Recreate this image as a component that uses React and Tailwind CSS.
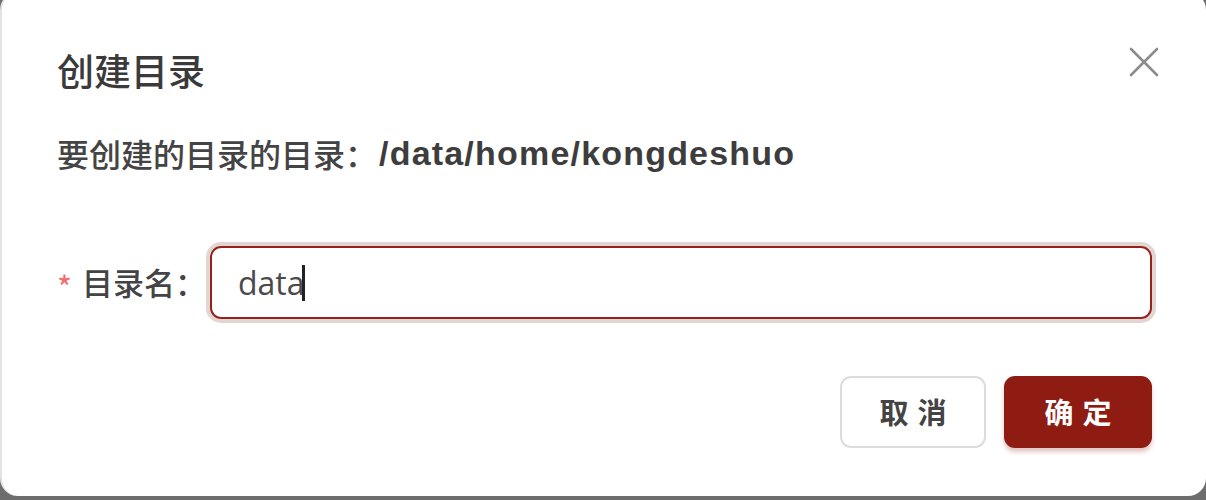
import { useState } from 'react';

const cjk = { fontFamily: '"Noto Sans CJK SC", "Noto Sans", sans-serif' };

export default function App() {
  const [name, setName] = useState('data');

  return (
    <div className="w-[1206px] h-[500px] bg-[#6d6d6d] overflow-hidden" style={cjk}>
      <div className="relative -mt-[8px] h-[504px] bg-white rounded-[18px] border-l-2 border-[#e2e2e2] pl-[55px] pr-[54px] pt-[56px]">
        {/* close */}
        <button className="absolute right-[47px] top-[55px] w-[30px] h-[30px] flex items-center justify-center">
          <svg width="30" height="30" viewBox="0 0 30 30" fill="none" stroke="#8c8c8c" strokeWidth="2.6" strokeLinecap="round">
            <path d="M2 2 L28 28 M28 2 L2 28" />
          </svg>
        </button>

        <h1 className="text-[37px] leading-[44px] text-[#3a3a3a] font-medium">创建目录</h1>

        <div className="mt-[40px] flex items-center h-[42px] text-[32px] text-[#444] font-medium">
          <span>要创建的目录的目录：</span>
          <span className="ml-[2px] font-bold text-[34px] tracking-[1.2px] text-[#3d3d3d]" style={{ fontFamily: '"Liberation Sans", Arial, sans-serif' }}>
            /data/home/kongdeshuo
          </span>
        </div>

        <div className="mt-[72px] flex items-center">
          <label className="flex items-center w-[153px] shrink-0 whitespace-nowrap text-[31px] text-[#444] font-medium">
            <span className="text-[#f26b6b] text-[32px] font-normal mr-[10px] mt-[6px]">*</span>
            <span>目录名：</span>
          </label>
          <div className="relative flex-1">
            <input
              value={name}
              onChange={(e) => setName(e.target.value)}
              className="w-full h-[73px] rounded-[11px] border-[2.5px] border-[#962219] shadow-[0_0_0_4px_rgba(110,50,40,0.2)] px-[26px] text-[32px] text-[#4a4a4a] outline-none"
              style={{ fontFamily: '"Open Sans", "Noto Sans", sans-serif' }}
            />
            {/* caret */}
            <span className="absolute left-[92px] top-[19px] w-[3px] h-[36px] bg-[#222]" />
          </div>
        </div>

        <div className="mt-[57px] flex justify-end gap-[18px]">
          <button className="w-[146px] h-[72px] rounded-[11px] border-2 border-[#dcdcdc] bg-white text-[29px] font-bold tracking-[9px] pl-[9px] text-[#444]">
            取消
          </button>
          <button className="w-[148px] h-[72px] rounded-[11px] bg-[#8e1c13] text-white text-[29px] font-bold tracking-[9px] pl-[9px] shadow-[0_4px_4px_rgba(142,28,19,0.25)]">
            确定
          </button>
        </div>
      </div>
    </div>
  );
}
